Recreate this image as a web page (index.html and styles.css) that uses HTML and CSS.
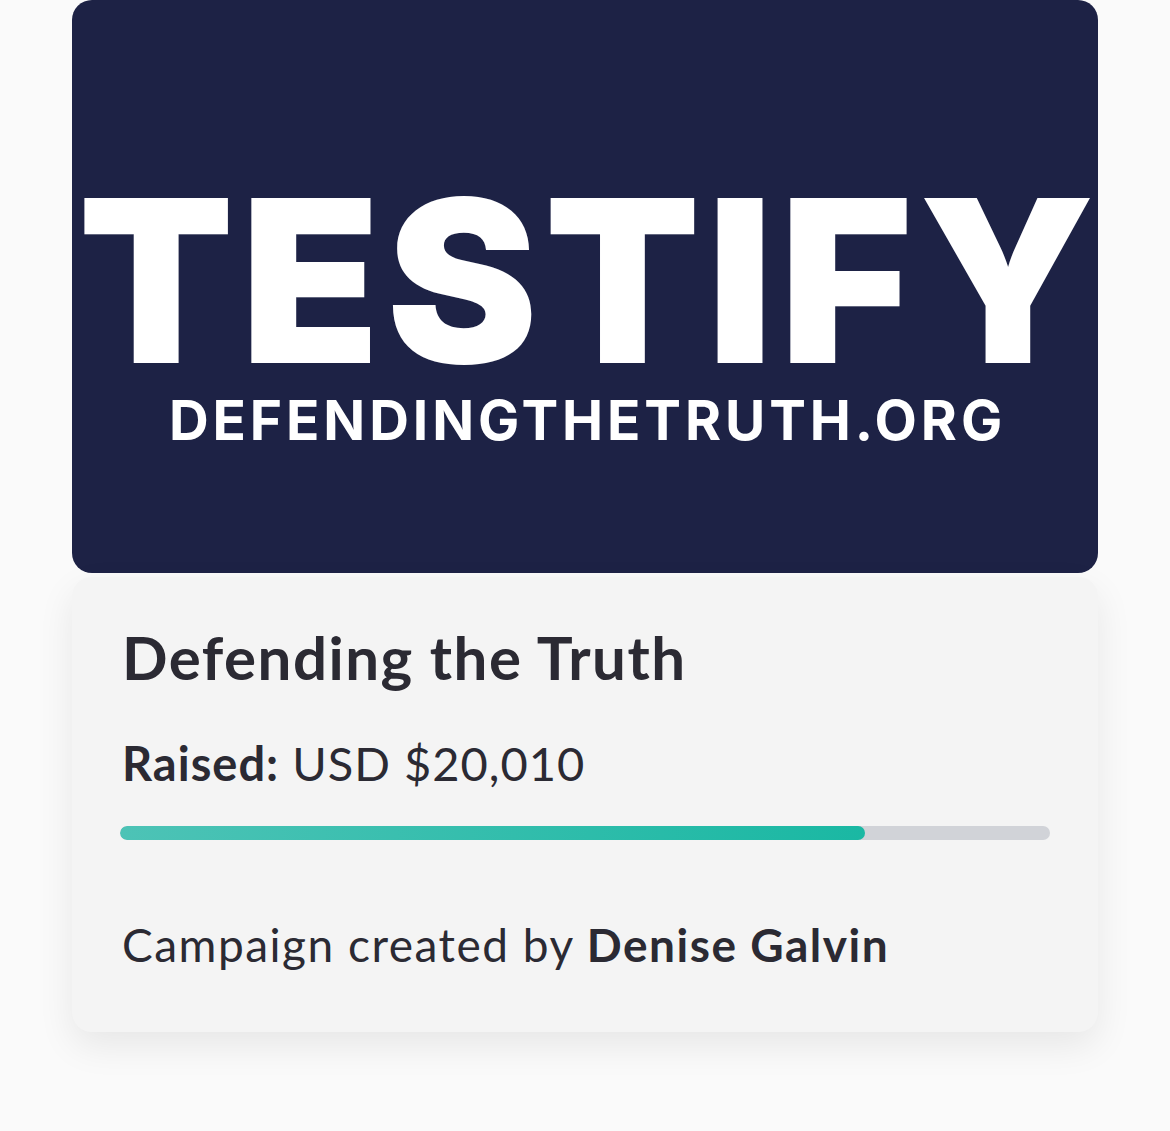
FILE: index.html
```html
<!DOCTYPE html>
<html>
<head>
<meta charset="utf-8">
<link rel="stylesheet" href="styles.css">
</head>
<body>
<div class="page">
  <div class="banner">
    <div class="logo">
      <div class="logo-main">TESTIFY</div>
      <div class="logo-sub">DEFENDINGTHETRUTH.ORG</div>
    </div>
  </div>
  <div class="card">
    <h1 class="title">Defending the Truth</h1>
    <p class="raised"><strong>Raised:</strong> USD $20,010</p>
    <div class="track"><div class="fill" style="width: 80.1%"></div></div>
    <p class="creator">Campaign created by <strong>Denise Galvin</strong></p>
  </div>
</div>
</body>
</html>
```
FILE: styles.css
```css
html, body {
  margin: 0;
  padding: 0;
  background: #fafafa;
}
.page {
  width: 1026px;
  margin-left: 72px;
  padding-bottom: 99px;
}
.banner {
  height: 573px;
  background: #1d2245;
  border-radius: 20px;
  display: flex;
  align-items: center;
  justify-content: center;
}
.logo {
  display: flex;
  flex-direction: column;
  align-items: center;
  color: #ffffff;
  font-family: Inter, "Liberation Sans", sans-serif;
  margin-top: 65px;
}
.logo-main {
  font-weight: 900;
  font-size: 227px;
  line-height: 180px;
  letter-spacing: 6.7px;
  padding-left: 10px;
}
.logo-sub {
  margin-top: 21px;
  font-weight: 700;
  font-size: 55px;
  line-height: 56px;
  letter-spacing: 3.9px;
  padding-left: 5px;
}
.card {
  margin-top: 4px;
  height: 455px;
  box-sizing: border-box;
  background: #f4f4f4;
  border-radius: 20px;
  box-shadow: 0 14px 36px rgba(0, 0, 0, 0.08);
  padding: 40px 48px 0 50px;
  font-family: Lato, "Liberation Sans", sans-serif;
  color: #2b2a33;
}
.title {
  margin: 0;
  font-size: 60px;
  line-height: 80px;
  font-weight: 700;
  letter-spacing: 1.5px;
}
.raised {
  margin: 36px 0 0;
  font-size: 47px;
  line-height: 60px;
  font-weight: 400;
  letter-spacing: 1px;
}
.raised strong {
  font-weight: 700;
}
.track {
  margin: 33px 0 0 -2px;
  height: 14px;
  border-radius: 7px;
  background: #d1d3d8;
  overflow: hidden;
}
.fill {
  height: 100%;
  border-radius: 7px;
  background: linear-gradient(90deg, #4dc3b6, #1ab8a3);
}
.creator {
  margin: 75px 0 0;
  font-size: 46px;
  line-height: 60px;
  letter-spacing: 1.5px;
}
.creator strong {
  font-weight: 700;
}
```
